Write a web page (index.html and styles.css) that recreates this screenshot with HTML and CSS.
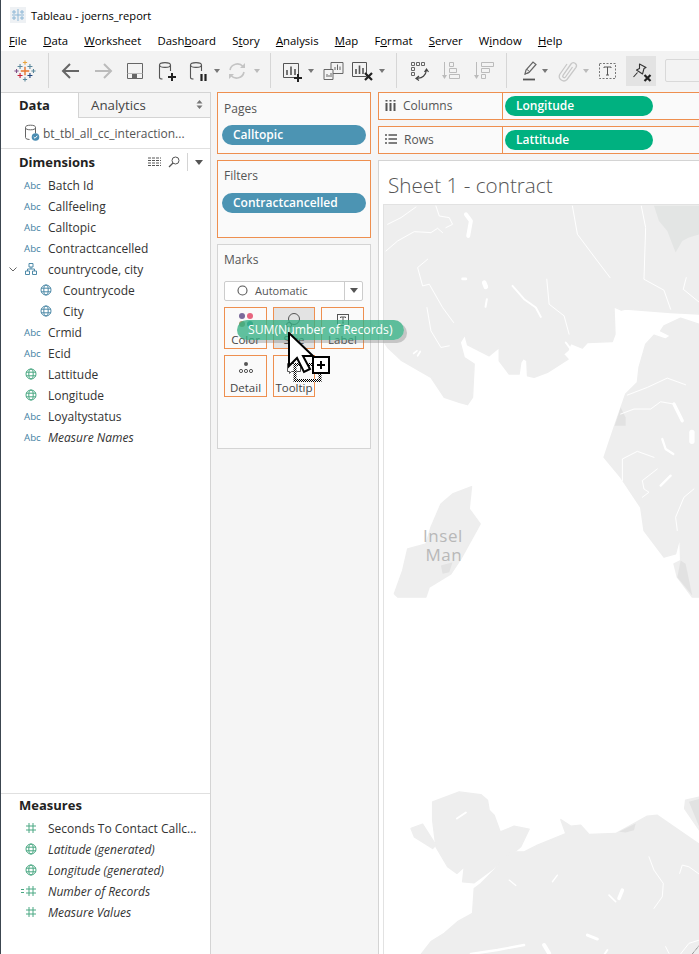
FILE: index.html
```html
<!DOCTYPE html>
<html lang="en">
<head>
<meta charset="utf-8">
<title>Tableau - joerns_report</title>
<link rel="stylesheet" href="styles.css">
</head>
<body>
<svg class="defs" width="0" height="0">
  <defs>
    <symbol id="globe" viewBox="0 0 12 12"><g fill="none" stroke="currentColor" stroke-width="1"><circle cx="6" cy="6" r="5"/><ellipse cx="6" cy="6" rx="2.2" ry="5"/><path d="M1 4.2h10M1 7.8h10"/></g></symbol>
    <symbol id="hash" viewBox="0 0 12 12"><path d="M4 1v10M8 1v10M1 4h10M1 8h10" fill="none" stroke="currentColor"/></symbol>
    <symbol id="caret" viewBox="0 0 8 24"><path d="M1 10h6l-3 4z" fill="#777"/></symbol>
    <symbol id="cyl" viewBox="0 0 24 24"><g fill="none" stroke="#555" stroke-width="1.1"><ellipse cx="10" cy="6" rx="5.5" ry="2.4"/><path d="M4.500 6v12.500q0 1.500 3 1.500M15.500 6v6"/></g></symbol>
    <pattern id="dither" width="2" height="2" patternUnits="userSpaceOnUse"><rect width="1" height="1" fill="#000"/><rect x="1" y="1" width="1" height="1" fill="#000"/><rect x="1" width="1" height="1" fill="#fff"/><rect y="1" width="1" height="1" fill="#fff"/></pattern>
  </defs>
</svg>
<div class="app">
  <header class="titlebar">
    <svg class="appicon" viewBox="0 0 16 16"><rect width="16" height="16" fill="#eef1f4"/><g stroke="#8db7d6" stroke-width="1" fill="none"><path d="M8 2v12M2 8h12M4 3v4M2 5h4M12 3v4M10 5h4M4 9v4M2 11h4M12 9v4M10 11h4"/></g></svg>
    <span>Tableau - joerns_report</span>
  </header>
  <nav class="menubar">
    <span><u>F</u>ile</span><span><u>D</u>ata</span><span><u>W</u>orksheet</span><span>Dash<u>b</u>oard</span><span>S<u>t</u>ory</span><span><u>A</u>nalysis</span><span><u>M</u>ap</span><span>F<u>o</u>rmat</span><span><u>S</u>erver</span><span>W<u>i</u>ndow</span><span><u>H</u>elp</span>
  </nav>
  <div class="toolbar">
    <svg class="t" viewBox="-5 -5 34 34" fill="none" stroke-width="1.500">
      <path d="M12 6v12M6 12h12" stroke="#e8762d" stroke-width="2"/>
      <path d="M5 2v7M1.500 5.500h7" stroke="#5b879b"/><path d="M19 2v7M15.500 5.500h7" stroke="#5b879b"/>
      <path d="M5 15v7M1.500 18.500h7" stroke="#c72037"/><path d="M19 15v7M15.500 18.500h7" stroke="#1f447a"/>
      <path d="M12 -3v6M9 0h6" stroke="#e8a33d"/><path d="M12 21v6M9 24h6" stroke="#59879b"/><path d="M0 9v6M-3 12h6" stroke="#7e4f87"/><path d="M24 9v6M21 12h6" stroke="#59879b"/>
    </svg>
    <i class="sep m11"></i>
    <svg class="t m10" viewBox="0 0 24 24"><path d="M20 12H5M11 5l-7 7 7 7" fill="none" stroke="#666" stroke-width="2"/></svg>
    <svg class="t m8" viewBox="0 0 24 24"><path d="M4 12h15M13 5l7 7-7 7" fill="none" stroke="#bbb" stroke-width="2"/></svg>
    <svg class="t m8" viewBox="0 0 24 24"><path d="M4.500 4.500h15v15h-15z" fill="none" stroke="#666"/><path d="M4.500 14.500h15" stroke="#bbb"/><path d="M9 19v-4h5v4z" fill="#666"/></svg>
    <svg class="t m8" viewBox="0 0 24 24"><use href="#cyl"/><path d="M17 14v8M13 18h8" stroke="#222" stroke-width="2"/></svg>
    <svg class="t m7" viewBox="0 0 24 24"><use href="#cyl"/><path d="M15.500 15v7M19.500 15v7" stroke="#222" stroke-width="2.200"/></svg>
    <svg class="c m3" viewBox="0 0 8 24"><use href="#caret"/></svg>
    <svg class="t m4" viewBox="0 0 24 24"><g fill="none" stroke="#c4c4c4" stroke-width="1.600"><path d="M5 11a7.500 7.500 0 0 1 13-3.500M19 13a7.500 7.500 0 0 1-13 3.500"/></g><path d="M20 4v5h-5zM4 20v-5h5z" fill="#c4c4c4"/></svg>
    <svg class="c m4" viewBox="0 0 8 24"><path d="M1 10h6l-3 4z" fill="#bbb"/></svg>
    <i class="sep m9"></i>
    <svg class="t m9" viewBox="0 0 24 24"><path d="M3.500 4.500h15v14h-15z" fill="none" stroke="#555"/><path d="M7 16v-5M11 16V7.500M15 16v-6" stroke="#555" stroke-width="1.600"/><path d="M18 15v8M14 19h8" stroke="#222" stroke-width="2"/></svg>
    <svg class="c m3" viewBox="0 0 8 24"><use href="#caret"/></svg>
    <svg class="t m6" viewBox="0 0 24 24"><g fill="none" stroke="#666"><path d="M10 3.500h12v11H10z"/><path d="M3 10.500h9v10H3z" fill="#f3f3f3"/></g><path d="M14 11V8M16.500 11V5.500M19 11V7.500M6 18v-3M8 18v-2M10 18v-4" stroke="#666"/></svg>
    <svg class="t m6" viewBox="0 0 24 24"><path d="M1.500 3.500h14v14h-14z" fill="none" stroke="#555"/><path d="M5 15v-5M8.500 15V6.500M12 15v-6" stroke="#555" stroke-width="1.600"/><path d="M14 14l7 7M21 14l-7 7" stroke="#222" stroke-width="2.200"/></svg>
    <svg class="c m3" viewBox="0 0 8 24"><use href="#caret"/></svg>
    <i class="sep m10"></i>
    <svg class="t m10" viewBox="0 0 24 24"><path d="M4.500 3.500h3v3h-3zM9.500 3.500h3v3h-3zM14.500 3.500h3v3h-3zM4.500 8.500h3v3h-3zM4.500 13.500h3v3h-3z" fill="none" stroke="#666"/><path d="M10 19c5 1 9-3 9.500-8M17.500 13l2-3 2 3M12 17l-3 2.500 3 2" fill="none" stroke="#444" stroke-width="1.200"/></svg>
    <svg class="t m8" viewBox="0 0 24 24"><g fill="none" stroke="#bbb"><path d="M10.500 3.500h4v4h-4zM10.500 9.500h7v4h-7zM10.500 15.500h10v4h-10z"/><path d="M5.500 3v15"/></g><path d="M3 16h5l-2.500 4z" fill="#bbb"/></svg>
    <svg class="t m8" viewBox="0 0 24 24"><g fill="none" stroke="#bbb"><path d="M10.500 3.500h12v4h-12zM10.500 9.500h8v4h-8zM10.500 15.500h4v4h-4z"/><path d="M5.500 3v15"/></g><path d="M3 16h5l-2.500 4z" fill="#bbb"/></svg>
    <i class="sep m11"></i>
    <svg class="t m10" viewBox="0 0 24 24"><path d="M8 15l1-4 7-8 3 2.500-7 8z" fill="none" stroke="#666" stroke-width="1.200"/><path d="M8 15l4-1.500M10 10.500l3 2.500" stroke="#666"/><path d="M6 20.500h12" stroke="#555" stroke-width="1.800"/></svg>
    <svg class="c" viewBox="0 0 8 24"><use href="#caret"/></svg>
    <svg class="t m7" viewBox="0 0 24 24"><path d="M16.500 8L9.500 18a1.500 1.500 0 0 1-2.500-1.700L15 5a3 3 0 0 1 5 3.300L11 20.500a4.500 4.500 0 0 1-7.300-5L11 5" fill="none" stroke="#c8c8c8" stroke-width="1.300"/></svg>
    <svg class="c m2" viewBox="0 0 8 24"><path d="M1 10h6l-3 4z" fill="#bbb"/></svg>
    <svg class="t m6" viewBox="0 0 24 24"><rect x="3.500" y="4.500" width="16" height="15" fill="none" stroke="#777" stroke-dasharray="2 1.500"/><path d="M8 9V8h7v1M11.500 8v8M10 16h3" fill="none" stroke="#555"/></svg>
    <div class="pinbtn m6"><svg viewBox="0 0 24 24" width="24" height="24"><path d="M10.500 5L17 8.500 15 9.500 13.500 15 7.500 11 10.500 9.500ZM8.500 13.500L4.500 18" fill="none" stroke="#333" stroke-width="1.100" stroke-linejoin="round"/><path d="M15.500 16l6 6M21.500 16l-6 6" stroke="#222" stroke-width="2.200"/></svg></div>
    <div class="tb-input"></div>
  </div>
  <main class="workspace">
    <aside class="sidebar">
      <div class="tabs">
        <div class="tab tab-on">Data</div>
        <div class="tab tab-off"><span>Analytics</span><svg width="7" height="9" viewBox="0 0 7 9"><path d="M3.500 0l3 3.500h-6zM3.500 9l3-3.500h-6z" fill="#777"/></svg></div>
      </div>
      <div class="dsrow">
        <svg width="16" height="18" viewBox="0 0 16 18"><g fill="none" stroke="#666"><ellipse cx="6.500" cy="3.500" rx="5" ry="2.300"/><path d="M1.500 3.500v10q0 2 4 2M11.500 3.500v6"/></g><circle cx="11.500" cy="13" r="3.800" fill="#4a8db3"/><path d="M9.700 13l1.300 1.300 2.300-2.500" fill="none" stroke="#fff"/></svg>
        <span>bt_tbl_all_cc_interaction...</span>
      </div>
      <section class="dims">
        <div class="sechead">
          <h2>Dimensions</h2>
          <svg class="hicon" width="13" height="10" viewBox="0 0 13 10"><path d="M0 1h13M0 3.500h13M0 6h13M0 8.500h13" stroke="#555" stroke-dasharray="3 1"/></svg>
          <svg class="hicon" width="12" height="12" viewBox="0 0 12 12"><circle cx="7.500" cy="4.500" r="3.500" fill="none" stroke="#555"/><path d="M5 7l-4 4" stroke="#555" stroke-width="1.300"/></svg>
          <i class="hsep"></i>
          <svg class="hicon" width="8" height="5" viewBox="0 0 8 5"><path d="M0 0h8L4 5z" fill="#555"/></svg>
        </div>
        <div class="field"><b class="abc">Abc</b><span>Batch Id</span></div>
        <div class="field"><b class="abc">Abc</b><span>Callfeeling</span></div>
        <div class="field"><b class="abc">Abc</b><span>Calltopic</span></div>
        <div class="field"><b class="abc">Abc</b><span>Contractcancelled</span></div>
        <div class="field">
          <svg class="chev" width="8" height="5" viewBox="0 0 8 5"><path d="M.5.500L4 4 7.500.5" fill="none" stroke="#666"/></svg>
          <svg class="ico blue" width="12" height="12" viewBox="0 0 12 12"><path d="M4 .5h4v3.500H4zM.5 8h4v3.500h-4zM7.500 8h4v3.500h-4zM2.500 8V6h7v2M6 4v2" fill="none" stroke="currentColor"/></svg>
          <span>countrycode, city</span>
        </div>
        <div class="field sub"><svg class="ico blue"><use href="#globe"/></svg><span>Countrycode</span></div>
        <div class="field sub"><svg class="ico blue"><use href="#globe"/></svg><span>City</span></div>
        <div class="field"><b class="abc">Abc</b><span>Crmid</span></div>
        <div class="field"><b class="abc">Abc</b><span>Ecid</span></div>
        <div class="field"><svg class="ico green"><use href="#globe"/></svg><span>Lattitude</span></div>
        <div class="field"><svg class="ico green"><use href="#globe"/></svg><span>Longitude</span></div>
        <div class="field"><b class="abc">Abc</b><span>Loyaltystatus</span></div>
        <div class="field"><b class="abc">Abc</b><em>Measure Names</em></div>
      </section>
      <section class="measures">
        <div class="sechead"><h2>Measures</h2></div>
        <div class="field"><svg class="ico green"><use href="#hash"/></svg><span>Seconds To Contact Callc...</span></div>
        <div class="field"><svg class="ico green"><use href="#globe"/></svg><em>Latitude (generated)</em></div>
        <div class="field"><svg class="ico green"><use href="#globe"/></svg><em>Longitude (generated)</em></div>
        <div class="field"><svg class="ico green wide" viewBox="-4 0 16 12"><path d="M-4 4.500h3M-4 7.500h3" stroke="currentColor"/><use href="#hash" width="12" height="12"/></svg><em>Number of Records</em></div>
        <div class="field"><svg class="ico green"><use href="#hash"/></svg><em>Measure Values</em></div>
      </section>
    </aside>
    <div class="cards">
      <section class="card card-pages">
        <h3>Pages</h3>
        <div class="pill blue-pill">Calltopic</div>
      </section>
      <section class="card card-filters">
        <h3>Filters</h3>
        <div class="pill blue-pill">Contractcancelled</div>
      </section>
      <section class="card card-marks">
        <h3>Marks</h3>
        <div class="select">
          <svg width="11" height="11" viewBox="0 0 11 11"><circle cx="5.500" cy="5.500" r="4.500" fill="none" stroke="#555" stroke-width="1.100"/></svg>
          <span>Automatic</span>
          <i class="select-btn"><svg width="8" height="5" viewBox="0 0 8 5"><path d="M0 0h8L4 5z" fill="#555"/></svg></i>
        </div>
        <div class="markgrid">
          <div class="mark">
            <svg width="16" height="16" viewBox="0 0 16 16"><circle cx="4" cy="4" r="3" fill="#7a6a9b"/><circle cx="12" cy="4" r="3" fill="#e7657f"/><circle cx="4" cy="12" r="3" fill="#a49a6a"/><circle cx="12" cy="12" r="3" fill="#3a9a9f"/></svg>
            <span>Color</span>
          </div>
          <div class="mark mark-on">
            <svg width="16" height="16" viewBox="0 0 16 16"><circle cx="8" cy="7" r="5.500" fill="none" stroke="#555"/><circle cx="3" cy="13" r="2.500" fill="none" stroke="#555"/></svg>
            <span>Size</span>
          </div>
          <div class="mark">
            <svg width="16" height="16" viewBox="0 0 16 16"><rect x="2.500" y="2.500" width="11" height="11" fill="none" stroke="#555"/><path d="M5.500 6V5h5v1M8 5v6M7 11h2" fill="none" stroke="#555"/></svg>
            <span>Label</span>
          </div>
          <div class="mark">
            <svg width="16" height="16" viewBox="0 0 16 16"><circle cx="8" cy="4" r="2" fill="#555"/><circle cx="3" cy="11" r="1.600" fill="none" stroke="#555"/><circle cx="8" cy="11" r="1.600" fill="none" stroke="#555"/><circle cx="13" cy="11" r="1.600" fill="none" stroke="#555"/></svg>
            <span>Detail</span>
          </div>
          <div class="mark">
            <svg width="16" height="16" viewBox="0 0 16 16"><path d="M1.500 3.500h13v8h-9l-2 2v-2h-2z" fill="none" stroke="#555"/></svg>
            <span>Tooltip</span>
          </div>
        </div>
      </section>
    </div>
    <div class="viewcol">
      <div class="shelf">
        <div class="shelf-label">
          <svg width="11" height="11" viewBox="0 0 11 11"><path d="M1.500 3v8M5.500 3v8M9.500 3v8" stroke="#555" stroke-width="2"/><path d="M1.500 0v1.500M5.500 0v1.500M9.500 0v1.500" stroke="#555" stroke-width="2"/></svg>
          <span>Columns</span>
        </div>
        <div class="pill green-pill">Longitude</div>
      </div>
      <div class="shelf">
        <div class="shelf-label">
          <svg width="12" height="10" viewBox="0 0 12 10"><path d="M0 1h2M3.500 1H12M0 5h2M3.500 5H12M0 9h2M3.500 9H12" stroke="#555" stroke-width="1.500"/></svg>
          <span>Rows</span>
        </div>
        <div class="pill green-pill">Lattitude</div>
      </div>
      <section class="view">
        <h1>Sheet 1 - contract</h1>
        <svg class="map" viewBox="383 204 316 750" preserveAspectRatio="xMinYMin slice">
          <g transform="translate(380 200) scale(.33333)">
            <g fill="#eee" stroke="#eee" stroke-linejoin="round" stroke-width="4">
              <path d="M0 0H960V340L870 335 735 325 722 328 700 318 703 400 695 422 620 425 605 442 570 428 562 448 548 460 562 475 500 515 460 530 440 525 438 480 428 473 420 485 415 520 385 520 355 480 355 440 325 465 260 432 252 402 238 425 250 470 280 490 275 590 260 612 235 605 190 590 150 530 60 478 20 440 0 410Z"/>
              <path d="M960 372L900 352 850 375 840 390 870 405 855 415 820 403 795 430 775 500 770 545 735 580 700 680 670 770 720 830 780 920 790 990 850 1070 885 1060 898 1010 900 1080 880 1090 890 1130 935 1190 960 1190Z"/>
              <path d="M272 858L215 880 180 910 150 980 135 1030 80 1045 65 1110 40 1180 50 1190 135 1190 145 1160 210 1120 240 1075 298 970 265 925Z"/>
            </g>
            <path d="M820 14H957V100L925 110 905 120 885 155 860 90 835 60Z" fill="#e3e5e4"/>
            <path d="M720 620L735 650 735 675 702 675Z" fill="#e2e2e2"/>
            <path d="M180 1095L215 1085 205 1115 185 1120Z" fill="#e2e2e2"/>
            <path d="M900 1080L890 1130 935 1185 915 1090Z" fill="#e2e2e2"/>
            <g fill="none" stroke="#fff" stroke-width="3" stroke-linejoin="round" stroke-linecap="round">
              <path d="M20 70L60 50 105 18"/>
              <path d="M15 150L50 120 100 92 150 95 170 82 185 95"/>
              <path d="M165 15L175 45 205 50 215 70 195 80"/>
              <path d="M140 175L110 200 125 255 145 250 185 320 218 365"/>
              <path d="M138 320L150 390 180 440 205 435"/>
              <path d="M498 235L505 310 550 345 565 400"/>
              <path d="M575 15L590 100 650 180 688 230"/>
              <path d="M782 15L795 80 790 235 850 268 870 325"/>
              <path d="M917 230L908 265 957 305"/>
              <path d="M740 583L800 560 860 532 915 552"/>
              <path d="M720 640L760 625 810 625 840 603 880 610"/>
              <path d="M725 840L725 775 770 752 820 770"/>
              <path d="M830 805L785 840 790 865 805 875 785 890"/>
              <path d="M940 865L910 890 885 950 890 990"/>
              <path d="M395 255L430 295 465 320 480 348" stroke-width="6"/>
              <path d="M255 40L270 60 262 105" stroke-width="12"/>
              <path d="M880 610L905 660" stroke-width="10"/>
              <path d="M934 695V722" stroke-width="16"/>
              <path d="M845 715L855 745 878 760" stroke-width="7"/>
              <path d="M870 825L840 855" stroke-width="7"/>
              <path d="M245 234H255" stroke-width="8"/>
              <path d="M310 245L315 258" stroke-width="14"/>
              <path d="M318 295L314 318" stroke-width="6"/>
              <path d="M98 458L108 450M110 465L118 452" stroke-width="5"/>
              <path d="M555 425L570 445" stroke-width="6"/>
            </g>
          </g>
          <g transform="translate(380 600) scale(.33333)">
            <g fill="#eee" stroke="#eee" stroke-linejoin="round" stroke-width="4">
              <path d="M155 605L235 575 300 583 320 600 325 630 340 645 358 695 400 678 445 687 420 740 345 800 280 848 245 845 250 800 228 820 200 800 165 740 155 660Z"/>
              <path d="M90 685L125 672 165 735 155 745 100 710Z"/>
              <path d="M960 735L880 680 830 645 800 648 705 700 625 703 600 675 570 678 540 658 555 700 470 735 430 755 390 755 350 800 300 850 280 865 275 940 230 965 190 1000 150 1025 115 1070H960Z"/>
              <path d="M960 590L915 600 912 625 960 695Z"/>
            </g>
            <path d="M715 695L765 670 760 690 735 697Z" fill="#e2e2e2"/>
            <path d="M925 605L960 595V690Z" fill="#e2e2e2"/>
            <g fill="none" stroke="#fff" stroke-width="3" stroke-linejoin="round" stroke-linecap="round">
              <path d="M805 770L820 810 848 850 845 890 820 925"/>
              <path d="M960 825L925 800 905 795 897 820"/>
              <path d="M855 1040L865 1060"/>
              <path d="M228 655L255 637" stroke-width="6"/>
              <path d="M385 840L405 856" stroke-width="4"/>
              <path d="M530 825L515 845" stroke-width="4"/>
              <path d="M685 885L705 905" stroke-width="5"/>
              <path d="M725 870L715 895" stroke-width="11"/>
              <path d="M620 1005L650 1017" stroke-width="9"/>
              <path d="M490 1035L505 1060" stroke-width="12"/>
              <path d="M270 1062L350 1050 430 1035" stroke-width="7"/>
              <path d="M680 1050L670 1065" stroke-width="6"/>
            </g>
            <path d="M900 1062L925 1030 957 1020" fill="none" stroke="#fff" stroke-width="3"/>
            <path d="M935 1062L957 1035" fill="none" stroke="#777" stroke-width="3" stroke-dasharray="3 2"/>
          </g>
          <text class="maplabel" x="442" y="541">Insel</text>
          <text class="maplabel" x="443" y="560">Man</text>
        </svg>
      </section>
    </div>
  </main>
  <div class="dragpill">SUM(Number of Records)</div>
  <svg class="dragcursor" width="48" height="56" viewBox="0 0 48 56">
    <path d="M7 32.500h25v16H7z" fill="none" stroke="url(#dither)" stroke-width="3"/>
    <path d="M1 1v33l8-8 7 14 6-3-7-13h10z" fill="#fff" stroke="#000" stroke-width="2" stroke-linejoin="miter"/>
    <rect x="25" y="25" width="16" height="16" fill="#fff" stroke="#000" stroke-width="2"/>
    <path d="M29 33h8M33 29v8" stroke="#000" stroke-width="2"/>
  </svg>
</div>
</body>
</html>
```

FILE: styles.css
```css
* { box-sizing: border-box; }
html, body { margin: 0; padding: 0; }
body { width: 699px; height: 954px; overflow: hidden; background: #fff; font-family: "Open Sans", "Noto Sans", sans-serif; font-size: 12px; color: #333; }
.defs { position: absolute; }
.app { position: relative; width: 699px; height: 954px; border-left: 1px solid #3c4650; overflow: hidden; display: flex; flex-direction: column; }

.titlebar { height: 30px; flex: none; display: flex; align-items: center; padding-left: 9px; gap: 5px; color: #000; font-size: 11.100px; }
.appicon { width: 16px; height: 16px; }
.menubar { height: 21px; flex: none; display: flex; align-items: center; padding-left: 8px; gap: 16.200px; color: #000; font-size: 11.350px; }
.menubar u { text-underline-offset: 1px; }

.toolbar { height: 39px; flex: none; background: #f3f3f3; display: flex; align-items: center; padding-left: 12px; }
.t { width: 24px; height: 24px; flex: none; }
.c { width: 8px; height: 24px; flex: none; }
.sep { width: 1px; height: 35px; background: #d6d6d6; flex: none; }
.m2 { margin-left: 2px; } .m3 { margin-left: 3px; } .m4 { margin-left: 4px; } .m6 { margin-left: 6px; } .m7 { margin-left: 7px; } .m8 { margin-left: 8px; } .m9 { margin-left: 9px; } .m10 { margin-left: 10px; } .m11 { margin-left: 11px; }
.pinbtn { width: 30px; height: 30px; background: #e3e3e3; display: flex; align-items: center; justify-content: center; flex: none; }
.tb-input { width: 60px; height: 23px; margin-left: 9px; background: #f3f3f3; border: 1px solid #d9d9d9; border-radius: 2px; flex: none; }

.workspace { flex: 1; min-height: 0; display: flex; background: #f5f5f5; padding-top: 2px; }
.sidebar { width: 210px; flex: none; background: #fff; border-top: 1px solid #d4d4d4; border-right: 1px solid #d4d4d4; display: flex; flex-direction: column; }
.tabs { display: flex; height: 25px; flex: none; }
.tab { display: flex; align-items: center; padding-bottom: 1px; }
.tab-on { width: 77px; padding-left: 18px; font-weight: 700; color: #222; font-size: 13px; }
.tab-off { flex: 1; justify-content: space-between; padding: 0 7px 1px 12px; background: #f5f5f5; border-left: 1px solid #d4d4d4; border-bottom: 1px solid #d4d4d4; color: #444; font-size: 13.300px; }
.dsrow { height: 31px; flex: none; display: flex; align-items: center; gap: 3px; padding-left: 23px; border-bottom: 1px solid #e0e0e0; color: #555; }
.dims { flex: 1; min-height: 0; }
.measures { height: 161px; flex: none; border-top: 1px solid #e0e0e0; }
.sechead { height: 26px; display: flex; align-items: center; padding: 0 0 0 18px; }
.sechead h2 { margin: 0 auto 0 0; font-size: 13px; font-weight: 700; color: #222; }
.hicon { margin-right: 7px; flex: none; }
.hsep { width: 1px; height: 18px; background: #d4d4d4; margin-right: 7px; }
.measures .sechead { height: 24px; padding-bottom: 2px; }
.field { position: relative; height: 21px; display: flex; align-items: center; padding-left: 47px; color: #333; white-space: nowrap; }
.field.sub { padding-left: 62px; }
.field em { font-style: italic; }
.abc { position: absolute; left: 23px; font-size: 9.700px; font-weight: 400; color: #3f7fa3; top: 4px; line-height: 14px; }
.ico { position: absolute; left: 24px; top: 4px; width: 12px; height: 12px; }
.sub .ico { left: 39px; }
.ico.wide { left: 20px; width: 16px; }
.blue { color: #4e8aa8; }
.green { color: #4aa883; }
.chev { position: absolute; left: 8px; top: 8px; }

.cards { width: 154px; flex: none; margin-left: 6px; display: flex; flex-direction: column; gap: 6px; }
.card { background: #fafafa; border: 1px solid #ee8f4f; padding: 0 4px; }
.card h3 { margin: 0; padding: 7px 2px 0 2px; height: 32px; font-size: 12px; font-weight: 400; color: #555; }
.card-filters h3 { padding-top: 6px; }
.card-pages { height: 62px; }
.card-filters { height: 78px; }
.card-marks { height: 205px; border-color: #d4d4d4; padding: 0 6px; }
.card-marks h3 { height: 36px; padding: 6px 0 0; }
.pill { border-radius: 10px; height: 20px; line-height: 20px; color: #fff; font-weight: 600; padding-left: 11px; font-size: 12px; }
.blue-pill { background: #4c94b3; width: 144px; }
.green-pill { background: #00b180; width: 148px; margin: 3px 0 0 2px; height: 20px; }
.select { width: 139px; height: 20px; background: #fff; border: 1px solid #ccc; border-radius: 2px; display: flex; align-items: center; padding: 0 0 1px 12px; gap: 7px; color: #555; font-size: 11px; }
.select-btn { margin-left: auto; width: 18px; height: 18px; border-left: 1px solid #ccc; display: flex; align-items: center; justify-content: center; }
.markgrid { display: grid; grid-template-columns: 43px 42px 43px; gap: 6px 6px; margin-top: 6px; }
.mark { height: 42px; border: 1px solid #ee8f4f; display: flex; flex-direction: column; align-items: center; justify-content: space-between; padding: 4px 0 1px; color: #444; font-size: 11.500px; line-height: 14px; }
.mark-on { background: #e3e3e3; }

.viewcol { flex: 1; min-width: 0; margin-left: 7px; display: flex; flex-direction: column; }
.shelf { height: 28px; flex: none; display: flex; border: 1px solid #ee8f4f; border-right: 0; background: #fafafa; margin-bottom: 6px; }
.shelf-label { width: 124px; flex: none; display: flex; align-items: center; gap: 7px; padding: 0 0 2px 6px; border-right: 1px solid #ee8f4f; color: #555; }
.view { flex: 1; min-height: 0; background: #fff; border: 1px solid #d4d4d4; border-right: 0; border-bottom: 0; display: flex; flex-direction: column; }
.view h1 { margin: 0; height: 43px; padding: 10px 0 0 9px; font-size: 20.700px; line-height: 28px; font-weight: 300; color: #555; font-family: "Open Sans", sans-serif; }
.map { flex: 1; min-height: 0; width: 316px; margin-left: 4px; display: block; border-left: 1px solid #e2e2e2; border-top: 1px solid #e2e2e2; }
.maplabel { font-family: "Open Sans", sans-serif; font-size: 17px; fill: #b8b8b8; text-anchor: middle; letter-spacing: .6px; }

.dragpill { position: absolute; left: 236px; top: 320px; width: 167px; height: 20px; line-height: 20px; padding-left: 11px; border-radius: 10px; background: rgba(52, 175, 132, .78); color: #fff; font-size: 12.200px; box-shadow: 3px 3px 0 rgba(120, 120, 120, .35); white-space: nowrap; }
.dragcursor { position: absolute; left: 287px; top: 332px; }
```
